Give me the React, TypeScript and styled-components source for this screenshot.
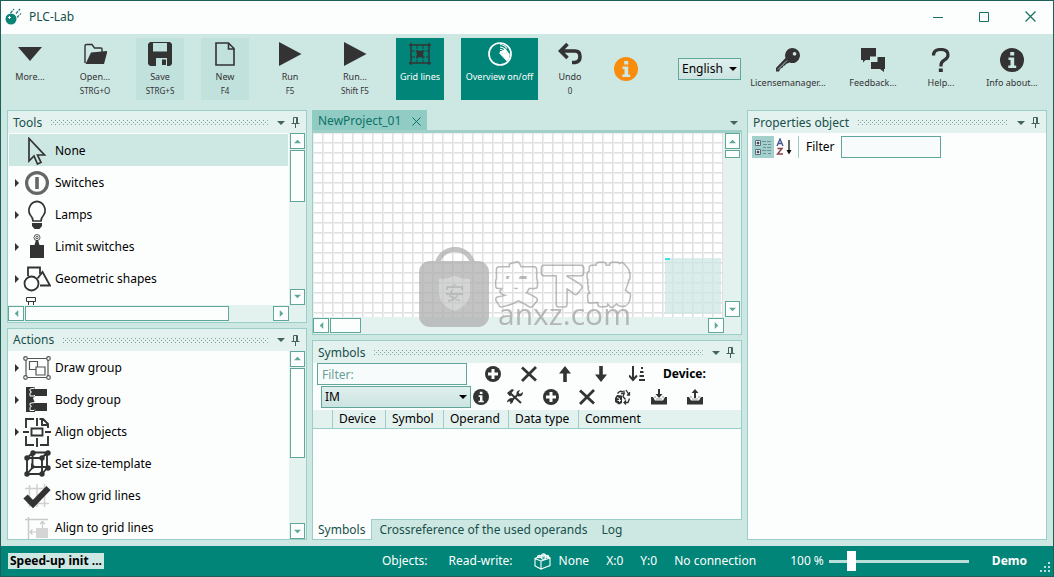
import React, { useId, useState } from "react";
import styled, { createGlobalStyle, css } from "styled-components";

const c = {
  teal: "#008578",
  frame: "#1f5f59",
  page: "#cde7e3",
  header: "#e3f1ef",
  border: "#9bcec6",
  strong: "#5fa79b",
  surface: "#fbfefd",
  ink: "#333333",
  title: "#17504a",
};

const Global = createGlobalStyle`
  *, *::before, *::after { box-sizing: border-box; }
  html, body { margin: 0; height: 100%; }
  #root { height: 100%; }
  body, button, input, select, table {
    font-family: "Noto Sans", "Noto Sans CJK SC", sans-serif;
    font-size: 12px;
    line-height: 16px;
  }
  button { border: 0; padding: 0; background: none; color: inherit; }
  svg { display: block; flex: none; }
`;

/* ---------- window ---------- */

const Window = styled.div`
  height: 100vh;
  display: flex;
  flex-direction: column;
  background: ${c.page};
  border: 1px solid ${c.frame};
  overflow: hidden;
`;

const TitleBar = styled.header`
  display: flex;
  align-items: center;
  flex: none;
  height: 33px;
  padding: 0 0 2px 4px;
  gap: 7px;
  background: ${c.surface};
  color: ${c.title};
`;

const AppTitle = styled.h1`
  margin: 0;
  flex: 1;
  font-size: 12px;
  font-weight: 400;
`;

const CaptionButtons = styled.div`
  display: flex;
`;

const CaptionButton = styled.button`
  width: 46px;
  height: 30px;
  display: grid;
  place-items: center;
  color: #15705f;
`;

/* ---------- toolbar ---------- */

const Toolbar = styled.div`
  display: flex;
  flex: none;
  height: 76px;
  padding: 4px 3px 10px 5px;
`;

const CommandGroup = styled.div`
  display: flex;
  gap: 17px;
`;

const ToolButton = styled.button<{ $width?: number; $tone?: "soft" | "solid" }>`
  flex: none;
  width: ${(p) => p.$width ?? 48}px;
  display: flex;
  flex-direction: column;
  align-items: center;
  padding-top: 4px;
  font-size: 9px;
  line-height: 14px;
  white-space: nowrap;
  color: ${c.ink};
  ${(p) => p.$tone === "soft" && css`background: #c1e1dd;`}
  ${(p) => p.$tone === "solid" && css`background: ${c.teal}; color: #fff;`}
`;

const ToolLabel = styled.span`
  margin-top: 4px;
`;

const Shortcut = styled.span`
  font-size: 8px;
  line-height: 14px;
`;

const NoticeButton = styled.button`
  align-self: center;
  margin-left: 29px;
`;

const SelectBox = styled.span<{ $width: number }>`
  display: grid;
  align-items: center;
  flex: none;
  width: ${(p) => p.$width}px;
  height: 22px;
  border: 1px solid ${c.strong};
  background: linear-gradient(#e0efed, #cbe4e1);
  > * { grid-area: 1 / 1; }
  > svg { justify-self: end; margin-right: 3px; pointer-events: none; }
`;

const Select = styled.select`
  appearance: none;
  width: 100%;
  border: 0;
  padding: 0 3px;
  background: none;
  color: #000;
`;

const LanguageBox = styled.div`
  align-self: center;
  margin-left: 40px;
`;

const HelpGroup = styled.div`
  display: flex;
  gap: 10px;
  margin-left: auto;
  padding-top: 6px;
`;

/* ---------- docking area ---------- */

const Workspace = styled.main`
  flex: 1;
  min-height: 0;
  display: grid;
  grid-template-columns: 300px minmax(0, 1fr) 300px;
  gap: 5px;
  padding: 0 6px 6px;
`;

const Column = styled.div`
  display: flex;
  flex-direction: column;
  gap: 5px;
  min-height: 0;
  min-width: 0;
`;

const Panel = styled.section`
  flex: 1 1 0;
  min-height: 0;
  display: flex;
  flex-direction: column;
  border: 1px solid ${c.border};
  background: ${c.surface};
`;

const PanelHeader = styled.div`
  display: flex;
  align-items: center;
  flex: none;
  height: 22px;
  padding: 1px 6px 0 5px;
  background: ${c.header};
  color: ${c.title};
`;

const PanelTitle = styled.h2`
  margin: 0 9px 0 0;
  font-size: 12px;
  font-weight: 400;
`;

const Grip = styled.svg`
  flex: 1;
  width: 0;
  height: 5px;
`;

const HeaderButton = styled.button`
  display: grid;
  place-items: center;
  width: 15px;
  height: 15px;
  color: #45625e;
`;

const HeaderButtons = styled.div`
  display: flex;
  margin-left: 5px;
  margin-right: -3px;
`;

const ScrollArea = styled.div<{ $horizontal?: boolean }>`
  flex: 1;
  min-height: 0;
  display: grid;
  grid-template-columns: minmax(0, 1fr) 17px;
  grid-template-rows: minmax(0, 1fr) ${(p) => (p.$horizontal ? "17px" : "")};
  background: ${c.header};
`;

const Bar = styled.div<{ $axis: "x" | "y" }>`
  display: flex;
  gap: 1px;
  background: ${c.header};
  flex-direction: ${(p) => (p.$axis === "y" ? "column" : "row")};
  padding: ${(p) => (p.$axis === "y" ? "0 1px" : "1px 0")};
  > :last-child { margin-${(p) => (p.$axis === "y" ? "top" : "left")}: auto; }
`;

const BarButton = styled.button`
  display: grid;
  place-items: center;
  flex: 0 0 16px;
  border: 1px solid ${c.strong};
  background: ${c.surface};
  color: ${c.strong};
`;

const Thumb = styled.div<{ $length: number }>`
  flex: 0 1 ${(p) => p.$length}px;
  border: 1px solid ${c.strong};
  background: ${c.surface};
`;

const List = styled.ul`
  margin: 0;
  padding: 1px 1px 0;
  list-style: none;
  overflow: hidden;
  background: ${c.surface};
`;

const Row = styled.button<{ $selected?: boolean }>`
  display: flex;
  align-items: center;
  width: 100%;
  height: 32px;
  padding-top: 1px;
  padding-left: 4px;
  text-align: left;
  color: #000;
  background: ${(p) => (p.$selected ? c.page : "transparent")};
`;

const Expander = styled.span`
  width: 9px;
  color: ${c.ink};
`;

const RowIcon = styled.span`
  display: grid;
  place-items: center;
  width: 30px;
  margin-right: 3px;
  color: ${c.ink};
`;

/* ---------- editor ---------- */

const Editor = styled.section`
  position: relative;
  flex: 1;
  min-height: 0;
  display: flex;
  flex-direction: column;
`;

const DocTabs = styled.div`
  display: flex;
  flex: none;
  height: 20px;
  justify-content: space-between;
  align-items: stretch;
  padding-right: 1px;
`;

const DocTab = styled.div`
  display: flex;
  align-items: center;
  gap: 8px;
  padding: 2px 4px 0 6px;
  background: #90cbc4;
  color: #0d7266;
`;

const DocTabButton = styled.button`
  display: grid;
  place-items: center;
  min-width: 14px;
`;

const DocMenuButton = styled(HeaderButton)`
  align-self: flex-end;
`;

const EditorFrame = styled.div`
  flex: 1;
  min-height: 0;
  display: flex;
  border: 1px solid ${c.border};
  border-top: 3px solid #a0d0c9;
`;

const Canvas = styled.div`
  position: relative;
  background-color: #fff;
  background-image: linear-gradient(90deg, #e0e0e0 1px, #eeeeee 1px 2px, transparent 2px),
    linear-gradient(#e0e0e0 1px, #eeeeee 1px 2px, transparent 2px);
  background-size: 10px 10px;
  background-position: -1px -1px;
`;

const Overview = styled.div`
  position: absolute;
  right: 3px;
  bottom: 3px;
  width: 56px;
  height: 56px;
  background: rgba(205, 231, 227, 0.75);
  &::before {
    content: "";
    display: block;
    width: 5px;
    height: 2px;
    background: #3fdfe2;
  }
`;

const Watermark = styled.div`
  position: absolute;
  inset: auto 0 0;
  display: flex;
  justify-content: center;
  pointer-events: none;
`;

/* ---------- symbols ---------- */

const SymbolsDock = styled.div`
  flex: 0 0 200px;
  display: flex;
  flex-direction: column;
`;

const SymbolTools = styled.div<{ $indent: number }>`
  display: flex;
  align-items: center;
  height: 23px;
  padding-bottom: 1px;
  padding-left: ${(p) => p.$indent}px;
`;

const TextBox = styled.input<{ $width: number }>`
  width: ${(p) => p.$width}px;
  height: 22px;
  padding: 0 4px;
  border: 1px solid ${c.strong};
  background: #f7fbfb;
  &::placeholder { color: #6aa097; opacity: 1; }
`;

const IconButton = styled.button<{ $width?: number }>`
  display: grid;
  place-items: center;
  width: ${(p) => p.$width ?? 36}px;
  height: 20px;
  color: ${c.ink};
`;

const IconStrip = styled.div<{ $gap: number }>`
  display: flex;
  margin-left: ${(p) => p.$gap}px;
`;

const DeviceLabel = styled.strong`
  margin-left: 8px;
  color: #000;
`;

const Table = styled.table`
  width: 100%;
  margin-top: 1px;
  border-spacing: 0;
  table-layout: fixed;
`;

const Th = styled.th<{ $width?: number }>`
  width: ${(p) => (p.$width ? p.$width + "px" : "auto")};
  height: 19px;
  padding: 0 0 0 6px;
  background: ${c.header};
  border-bottom: 1px solid ${c.border};
  border-right: 1px solid ${c.border};
  font-weight: 400;
  text-align: left;
  line-height: 16px;
  color: #000;
  &:last-child { border-right: 0; }
`;

const DockTabs = styled.div`
  display: flex;
  flex: none;
  height: 20px;
`;

const DockTab = styled.button<{ $active?: boolean }>`
  padding: 0 7px;
  color: ${c.title};
  ${(p) =>
    p.$active &&
    css`
      margin-top: -1px;
      padding: 2px 6px 0 5px;
      background: ${c.surface};
      border: 1px solid ${c.border};
      border-top: 0;
    `}
`;

/* ---------- properties ---------- */

const PropertyTools = styled.div`
  display: flex;
  align-items: center;
  padding: 3px 4px;
`;

const PropertyButton = styled.button<{ $active?: boolean }>`
  display: grid;
  place-items: center;
  width: 22px;
  height: 22px;
  background: ${(p) => (p.$active ? "#a3d0cb" : "none")};
`;

const Divider = styled.span`
  width: 1px;
  height: 22px;
  margin: 0 7px 0 2px;
  background: ${c.border};
`;

const FilterLabel = styled.label`
  display: flex;
  align-items: center;
  gap: 7px;
  color: #000;
`;

/* ---------- status bar ---------- */

const StatusBar = styled.footer`
  display: flex;
  align-items: center;
  flex: none;
  height: 30px;
  padding-left: 7px;
  background: ${c.teal};
  color: #fff;
  white-space: nowrap;
`;

const Progress = styled.strong`
  padding: 0 2px;
  margin-right: auto;
  background: ${c.page};
  color: #000;
`;

const StatusItems = styled.div`
  display: flex;
  align-items: center;
  gap: 17px;
`;

const StatusItem = styled.span<{ $wide?: boolean }>`
  display: flex;
  align-items: center;
  gap: 8px;
  margin-right: ${(p) => (p.$wide ? 4 : 0)}px;
`;

const Zoom = styled.label`
  display: flex;
  align-items: center;
  gap: 5px;
  margin-left: 34px;
`;

const Slider = styled.input`
  appearance: none;
  width: 140px;
  height: 22px;
  margin: 0;
  background: linear-gradient(#b9dfda, #b9dfda) center / 100% 3px no-repeat;
  &::-webkit-slider-thumb {
    appearance: none;
    width: 9px;
    height: 20px;
    background: #fff;
  }
`;

const Edition = styled.strong`
  margin: 0 12px 0 23px;
`;

const ResizeGrip = styled.span`
  align-self: flex-end;
  padding: 0 2px 3px 0;
`;

/* ---------- drawings ---------- */

const Triangle = ({ dir = "down", w = 8 }: { dir?: "up" | "down" | "left" | "right"; w?: number }) => {
  const pts = { down: "0,2 8,2 4,6", up: "0,6 8,6 4,2", left: "6,0 6,8 2,4", right: "2,0 2,8 6,4" }[dir];
  return (
    <svg width={w} height={w} viewBox="0 0 8 8" fill="currentColor">
      <polygon points={pts} />
    </svg>
  );
};

const PinIcon = () => (
  <svg width="9" height="11" viewBox="0 0 9 11" fill="none" stroke="currentColor">
    <path d="M2.5 6V.5h4V6M5.500 1v5M.5 6.500h8M4.500 7v4" />
  </svg>
);

const LogoIcon = () => (
  <svg width="17" height="17" viewBox="0 0 17 17">
    <circle cx="6" cy="11" r="5.500" fill="#0b8475" />
    <path d="M3 9.500h3M4.500 8v3" stroke="#fff" strokeWidth="1" />
    <path d="M5.500 5 9 1M11 5.500l4-4.500M12 9.500l4-4" stroke="#2b7a70" strokeWidth="1.200" strokeDasharray="3 1" />
  </svg>
);

const InfoIcon = ({ size, bg = c.ink, fg = c.page }: { size: number; bg?: string; fg?: string }) => (
  <svg width={size} height={size} viewBox="0 0 24 24">
    <circle cx="12" cy="12" r="12" fill={bg} />
    <path d="M10.200 4h4v3.600h-4zM8.500 9.500h5.700v8h2V20H8.300v-2.500h2.200V12h-2z" fill={fg} />
  </svg>
);

const G24 = ({ children }: { children: React.ReactNode }) => (
  <svg width="24" height="24" viewBox="0 0 24 24" fill="currentColor">
    {children}
  </svg>
);

const MoreIcon = () => <G24><path d="M0 5h24L12 19z" /></G24>;
const OpenIcon = () => (
  <G24>
    <path d="M2 21V4q0-1.500 1.500-1.500H9L11.500 6H18q1 0 1 1v3" fill="none" stroke="currentColor" strokeWidth="1.400" />
    <path d="M8 10.500 24.500 9 21 22H2.500z" />
  </G24>
);
const SaveIcon = () => (
  <G24>
    <path fillRule="evenodd" d="M2 0h3v9.500h14V0h3l2 2v20l-2 2H2l-2-2V2zM5 0h14v1H5zM8 16v8h11v-8z" />
    <path d="M14 17.500h4V23h-4z" />
  </G24>
);
const NewIcon = () => (
  <G24>
    <path d="M3 1h12.500L21 6.500V23H3zM15.500 1v6H21" fill="none" stroke="currentColor" strokeWidth="1.600" />
  </G24>
);
const RunIcon = () => <G24><path d="M1 0 23.500 12 1 24z" /></G24>;
const GridIcon = () => (
  <G24>
    <path d="M3 1v22M21 1v22M1 3h22M1 21h22" stroke={c.ink} strokeWidth="1.400" />
    <path d="M9 3v18M15 3v18M3 9h18M3 15h18" stroke={c.ink} strokeWidth=".9" strokeDasharray="4 1" />
    <path d="M9 9h6v6H9z" fill={c.ink} />
  </G24>
);
const RadarIcon = () => (
  <G24>
    <circle cx="12" cy="12" r="11" fill="none" stroke="#fff" strokeWidth="1.700" />
    <path d="M11 11 21.500 11.500a9.500 9.500 0 0 1-2.500 8z" fill="#fff" />
    <path d="M11 11 17.500 6.500 21.500 12z" fill="#fff" />
    <path d="M12 2.500a9.500 9.500 0 0 1 7 4M12 5a7 7 0 0 1 5.500 3M12 7.300a5 5 0 0 1 4 2.200M12 9.500a3 3 0 0 1 2 1" stroke="#fff" strokeWidth="1.100" fill="none" />
  </G24>
);
const UndoIcon = () => (
  <G24>
    <path d="M9.500 2 2.500 9l7 7M3 9h14q5 0 5 5.500t-5 6h-3" fill="none" stroke="currentColor" strokeWidth="3.600" />
  </G24>
);
const KeyIcon = () => (
  <G24>
    <path fillRule="evenodd" d="M16.500 0a7.500 7.500 0 1 1-3 14.400L10 16l-1 1.500-1.500.3-1 2-2 .7L3 23.500H0V20L9.500 10A7.500 7.500 0 0 1 16.500 0zm2 4a1.800 1.800 0 1 0 .1 0z" />
    <path d="M2 21.500 11 12.500" stroke={c.page} strokeWidth=".8" />
  </G24>
);
const FeedbackIcon = () => (
  <G24>
    <path d="M0 0h15v8.500H9V12H4.500L2 14.500V12H0z" />
    <path d="M16.500 9H24v12h-1v3l-4-3h-9v-7h6.500z" />
  </G24>
);
const HelpIcon = () => (
  <G24>
    <path d="M4.500 7.500q0-6 7.300-6 7.200 0 7.200 5.500 0 3-3.800 5.200-3.200 2-3.200 4.800v1.500" fill="none" stroke="currentColor" strokeWidth="3.200" />
    <path d="M9.800 20.500h4V24h-4z" />
  </G24>
);

const CursorIcon = () => (
  <svg width="20" height="28" viewBox="0 0 20 28" fill="none" stroke={c.ink} strokeWidth="1.700">
    <path d="M2 1.500v22.500l5-5 3.500 8 3.500-1.600-3.500-7.400H17.500z" />
  </svg>
);
const SwitchIcon = () => (
  <svg width="24" height="24" viewBox="0 0 24 24">
    <circle cx="12" cy="12" r="10.400" fill="none" stroke="#666" strokeWidth="3.200" />
    <path d="M10.200 6h3.600v12h-3.600z" fill="#666" />
  </svg>
);
const LampIcon = () => (
  <svg width="22" height="30" viewBox="0 0 22 30">
    <path d="M7 21q0-3-3-6.500A9 9 0 0 1 11 1.300a9 9 0 0 1 7 13.200q-3 3.500-3 6.500z" fill="none" stroke={c.ink} strokeWidth="1.700" />
    <path d="M6 23h10v3l-2.500 3h-5L6 26z" fill={c.ink} />
  </svg>
);
const LimitIcon = () => (
  <svg width="14" height="26" viewBox="0 0 14 26">
    <circle cx="7" cy="3.500" r="3" fill="none" stroke={c.ink} strokeWidth=".8" />
    <circle cx="7" cy="3.500" r="1.200" fill="none" stroke={c.ink} strokeWidth=".8" />
    <path d="M6 6h2l1.500 5H14v13H0V11h4.500z" fill={c.ink} />
  </svg>
);
const ShapesIcon = () => (
  <svg width="28" height="26" viewBox="0 0 28 26" fill="none" stroke={c.ink} strokeWidth="1.800">
    <path d="M5 10V1.500h12V8" />
    <circle cx="8.500" cy="17.500" r="7" />
    <path d="M14.500 12.500 19.500 6 27 19.500H17" />
  </svg>
);
const PartIcon = () => (
  <svg width="28" height="28" viewBox="0 0 28 28" fill="none" stroke={c.ink}>
    <path d="M3.500.5h9v4h-9zM5.500 4.500V28M10.500 4.500V28" />
  </svg>
);
const DrawGroupIcon = () => (
  <svg width="28" height="24" viewBox="0 0 28 24" fill="none" stroke="#555" strokeWidth="1.200">
    <path d="M3 2.500h22v19H3z" />
    <path d="M6.500 5.500h8v8h-8z" />
    <path d="M13 11h9v8h-9z" fill={c.surface} />
    <g fill={c.surface}>
      <circle cx="2.500" cy="2.500" r="1.800" />
      <circle cx="25.500" cy="2.500" r="1.800" />
      <circle cx="2.500" cy="21.500" r="1.800" />
      <circle cx="25.500" cy="21.500" r="1.800" />
    </g>
  </svg>
);
const BodyGroupIcon = () => (
  <svg width="22" height="26" viewBox="0 0 22 26">
    <path d="M0 0h9v2h12v7H9l-2 2 2 5h12v8H9v1H0z" fill={c.ink} />
    <path d="M9 1 4 2v2l1.500 1L4 6v3h4l1-1M9 15.500l-5 .8v2l1.500 1-1.500 1v3.200h4l1-1" fill="none" stroke={c.surface} strokeWidth="1" />
  </svg>
);
const AlignIcon = () => (
  <svg width="28" height="30" viewBox="0 0 28 30" fill="none" stroke={c.ink} strokeWidth="1.900">
    <path d="M11 2H3v9M3 19v9h8M17 28h8v-9M16.500 2H20l5 5v4M14 1v8M14 21v9M0 15h6M22 15h6M19 2v6h6" />
    <path d="M8.500 11.500h11v7h-11z" />
  </svg>
);
const SizeIcon = () => (
  <svg width="28" height="28" viewBox="0 0 28 28" fill="none" stroke={c.ink} strokeWidth="1.900">
    <path d="M4 8h15v16H4zM10 2.500h14V18L19 24M4 8l6-5.500M19 8l5-5.500M9.500 3v14H24M4 24l6-7" />
    <g fill={c.ink} stroke="none">
      <circle cx="4" cy="8" r="2.700" />
      <circle cx="19" cy="8" r="2.700" />
      <circle cx="4" cy="24" r="2.700" />
      <circle cx="19" cy="24" r="2.700" />
      <circle cx="10" cy="3" r="2.700" />
      <circle cx="25" cy="3" r="2.700" />
      <circle cx="25" cy="18" r="2.700" />
      <path d="M8 13l5 4-5 3z" />
    </g>
  </svg>
);
const CheckIcon = () => (
  <svg width="28" height="24" viewBox="0 0 28 24" fill="none">
    <path d="M6.500 1v22M14 0v23M21.500 0v23M2 4.500h20M4 19.500h22" stroke="#cfcfcf" strokeWidth="1.500" />
    <path d="M2.500 12.500 10 20 25.500 4" stroke={c.ink} strokeWidth="6" />
  </svg>
);
const SnapIcon = () => (
  <svg width="26" height="24" viewBox="0 0 26 24" fill="none" stroke="#c9c9c9" strokeWidth="1.500">
    <path d="M4.500 1v23M1 3.500h23" />
    <path d="M12 12h12v10H12z" fill="#d5d5d5" stroke="none" />
    <path d="M6 16h6M8.500 13.500 6 16l2.500 2.500M18.500 12V5.500M16 8l2.500-2.500L21 8" strokeWidth="1.200" />
  </svg>
);

const G16 = ({ children }: { children: React.ReactNode }) => (
  <svg width="16" height="16" viewBox="0 0 16 16" fill="currentColor">
    {children}
  </svg>
);
const AddIcon = () => (
  <G16>
    <circle cx="8" cy="8" r="8" />
    <path d="M8 3v10M3 8h10" stroke={c.surface} strokeWidth="3" />
  </G16>
);
const DeleteIcon = () => <G16><path d="M1 1.500 15 14.500M15 1 1 15" stroke="currentColor" strokeWidth="2.800" /></G16>;
const UpIcon = () => <G16><path d="M8 0l6 7.500h-4.200V16H6.200V7.500H2z" /></G16>;
const DownIcon = () => <G16><path d="M8 16l6-7.500h-4.200V0H6.200v8.500H2z" /></G16>;
const SortIcon = () => (
  <G16>
    <path d="M4 0v14M0 9.500l4 4.500 4-4.500" fill="none" stroke="currentColor" strokeWidth="2" />
    <path d="M12 1h2v2h-2zM11 5h3.500v2H11zM10.500 9H15v2h-4.500zM10 13h6v2h-6z" />
  </G16>
);
const ToolsIcon = () => (
  <G16>
    <path d="M2 3 14 14" stroke="currentColor" strokeWidth="2" />
    <path d="M12 4.500 3 13" stroke="currentColor" strokeWidth="2" />
    <path d="M9.500 5.500Q9 1.500 13 1l-1.500 3 1.500 1L16 3q0 4.500-4.500 4.500zM0 4l5-4 2 1L4 4.500l.5 2L2.500 7zM6.500 10q0 4.500-3.500 5L4 12.500 2.500 12 0 13.500Q0 9.500 5 9z" />
  </G16>
);
const RecycleIcon = () => (
  <G16>
    <path d="M0 9l2-3 5 .5V14l-3 1.500L0 13z" />
    <path d="M2 8.500l2.500 1V13M2.500 11.500H6" stroke={c.surface} strokeWidth=".9" fill="none" />
    <path d="M2.500 4.500Q5 1 8 3M6 4.500h3V1.500M11 1l3.500 5.500M12 6h2.500V3M14.500 9.500 13 13.500H9.500M11 11.500 9 13.500l2 2M9.500 3.500 8 7.500l2.500 3" fill="none" stroke="currentColor" strokeWidth="1.300" />
  </G16>
);
const ImportIcon = () => (
  <G16>
    <path d="M0 8h2l2 3.500h8L14 8h2v7.500H0zM7 0h2v5h2.500L8 9 4.500 5H7z" />
    <path d="M3 8h2M11 8h2M5 10h6" stroke="#999" />
  </G16>
);
const ExportIcon = () => (
  <G16>
    <path d="M0 8h2l2 3.500h8L14 8h2v7.500H0zM7 9h2V4h2.500L8 0 4.500 4H7z" />
    <path d="M3 8h2M11 8h2M5 10h6" stroke="#999" />
  </G16>
);
const CategoryIcon = () => (
  <svg width="18" height="18" viewBox="0 0 18 18" fill="none">
    <path d="M1.500 2.500h5v5h-5zM1.500 11.500h5v5h-5z" fill="#fff" stroke="#54708f" />
    <path d="M2.500 5h3M4 3.500v3M2.500 14h3M4 12.500v3" stroke="#111" />
    <path d="M8 3.500h4M13 3.500h4M9 6.500h4M14 6.500h3M9 9.500h3M13 9.500h4M8 12.500h4M13 12.500h4M9 15.500h3M14 15.500h3" stroke="#6d8d99" />
  </svg>
);
const SortAzIcon = () => (
  <svg width="18" height="18" viewBox="0 0 18 18" fill="none">
    <path d="M1 8 4 1l3 7M2 5.500h4" stroke="#4b568f" strokeWidth="1.400" />
    <path d="M1.500 10.500H6L1.500 16H7" stroke="#8b4144" strokeWidth="1.400" />
    <path d="M13 2v13" stroke="#111" strokeWidth="1.300" />
    <path d="M10.500 12h5L13 16.500z" fill="#111" />
  </svg>
);
const CubeIcon = () => (
  <svg width="17" height="17" viewBox="0 0 17 17" fill="none" stroke="#fff" strokeWidth="1.100">
    <path d="M1 5.500 7 8v8L1 13zM7 8l9-3v7.500L7 16M1 5.500 10 1.500 16 5" />
    <ellipse cx="5.500" cy="3.500" rx="2" ry="1.300" />
    <ellipse cx="9.500" cy="5" rx="2" ry="1.300" />
    <ellipse cx="9.500" cy="1.800" rx="1.800" ry="1.100" />
    <ellipse cx="13" cy="3.300" rx="1.800" ry="1.100" />
  </svg>
);
const CrossIcon = ({ size = 9 }: { size?: number }) => (
  <svg width={size} height={size} viewBox="0 0 10 10" fill="none" stroke="currentColor" strokeWidth="1.100">
    <path d="M.5.5l9 9M9.500.5l-9 9" />
  </svg>
);

const WatermarkArt = () => (
  <svg width="216" height="88" viewBox="0 0 216 88" aria-hidden="true">
    <defs>
      <mask id="hollow" maskUnits="userSpaceOnUse" x="70" y="0" width="146" height="80">
        <rect x="70" width="146" height="80" fill="#fff" />
        <use href="#wordmark" stroke="#000" strokeWidth="4" fill="#000" />
      </mask>
      <text
        id="wordmark"
        x="77 123 169"
        y="53"
        fontSize="41"
        fontWeight="700"
        strokeLinejoin="round"
        fontFamily="'Noto Sans CJK SC', sans-serif"
      >
        安下载
      </text>
    </defs>
    <g opacity=".72">
      <path d="M18 20a18 17.500 0 0 1 36 0" fill="none" stroke="#adadad" strokeWidth="5" />
      <rect y="14" width="70" height="66" rx="11" fill="#adadad" />
      <path d="M20 32q9 0 15.500-3.500Q42 32 51 32v13q0 13-15.500 19Q20 58 20 45z" fill="#c4c6c6" />
      <path d="M28 43v-3h15v3M35.500 37v3M27 47h17M33 43l-2 6 10 5M39 47q-2 6-10 7" fill="none" stroke="#a3a5a5" strokeWidth="1.800" />
      <use href="#wordmark" stroke="#a0a0a0" strokeWidth="7" fill="#a0a0a0" mask="url(#hollow)" />
      <text x="79" y="78" fontSize="30" fontFamily="'Open Sans', sans-serif" fill="#a0a0a0">
        anxz.com
      </text>
    </g>
  </svg>
);

/* ---------- composed parts ---------- */

const DotGrip = () => {
  const id = useId();
  return (
    <Grip aria-hidden="true">
      <defs>
        <pattern id={id} width="4" height="4" patternUnits="userSpaceOnUse">
          <path d="M0 0h1v1H0zM2 2h1v1H2z" fill="#76a39d" />
        </pattern>
      </defs>
      <rect width="100%" height="5" fill={`url(#${id})`} />
    </Grip>
  );
};

const Header = ({ title }: { title: string }) => (
  <PanelHeader>
    <PanelTitle>{title}</PanelTitle>
    <DotGrip />
    <HeaderButtons>
      <HeaderButton aria-label={`${title} menu`}><Triangle /></HeaderButton>
      <HeaderButton aria-label={`Pin ${title}`}><PinIcon /></HeaderButton>
    </HeaderButtons>
  </PanelHeader>
);

const ScrollBar = ({ axis, length }: { axis: "x" | "y"; length: number }) => (
  <Bar $axis={axis}>
    <BarButton aria-label="Scroll back"><Triangle dir={axis === "y" ? "up" : "left"} w={7} /></BarButton>
    <Thumb $length={length} />
    <BarButton aria-label="Scroll forward"><Triangle dir={axis === "y" ? "down" : "right"} w={7} /></BarButton>
  </Bar>
);

type Item = { label: string; icon: React.ReactNode; group?: boolean };

const ItemList = ({ items, selected }: { items: Item[]; selected?: string }) => (
  <List>
    {items.map((item, i) => (
      <li key={i}>
        <Row $selected={!!item.label && item.label === selected} aria-label={item.label || "Parts"}>
          <Expander>{item.group && <Triangle dir="right" />}</Expander>
          <RowIcon>{item.icon}</RowIcon>
          {item.label}
        </Row>
      </li>
    ))}
  </List>
);

const tools: Item[] = [
  { label: "None", icon: <CursorIcon /> },
  { label: "Switches", icon: <SwitchIcon />, group: true },
  { label: "Lamps", icon: <LampIcon />, group: true },
  { label: "Limit switches", icon: <LimitIcon />, group: true },
  { label: "Geometric shapes", icon: <ShapesIcon />, group: true },
  { label: "", icon: <PartIcon /> },
];

const actions: Item[] = [
  { label: "Draw group", icon: <DrawGroupIcon />, group: true },
  { label: "Body group", icon: <BodyGroupIcon />, group: true },
  { label: "Align objects", icon: <AlignIcon />, group: true },
  { label: "Set size-template", icon: <SizeIcon /> },
  { label: "Show grid lines", icon: <CheckIcon /> },
  { label: "Align to grid lines", icon: <SnapIcon /> },
];

type Command = {
  label: string;
  keys?: string;
  icon: React.ReactNode;
  width?: number;
  tone?: "soft" | "solid";
};

const commands: Command[] = [
  { label: "More...", icon: <MoreIcon /> },
  { label: "Open...", keys: "STRG+O", icon: <OpenIcon /> },
  { label: "Save", keys: "STRG+S", icon: <SaveIcon />, tone: "soft" },
  { label: "New", keys: "F4", icon: <NewIcon />, tone: "soft" },
  { label: "Run", keys: "F5", icon: <RunIcon /> },
  { label: "Run...", keys: "Shift F5", icon: <RunIcon /> },
  { label: "Grid lines", icon: <GridIcon />, tone: "solid" },
  { label: "Overview on/off", icon: <RadarIcon />, width: 77, tone: "solid" },
  { label: "Undo", keys: "0", icon: <UndoIcon />, width: 30 },
];

const helpCommands: Command[] = [
  { label: "Licensemanager...", icon: <KeyIcon />, width: 80 },
  { label: "Feedback...", icon: <FeedbackIcon />, width: 70 },
  { label: "Help...", icon: <HelpIcon />, width: 46 },
  { label: "Info about...", icon: <InfoIcon size={24} />, width: 76 },
];

const CommandButton = ({ label, keys, icon, width, tone }: Command) => (
  <ToolButton $width={width} $tone={tone}>
    {icon}
    <ToolLabel>{label}</ToolLabel>
    {keys && <Shortcut>{keys}</Shortcut>}
  </ToolButton>
);

export default function App() {
  const [zoom, setZoom] = useState(100);
  return (
    <>
      <Global />
      <Window>
        <TitleBar>
          <LogoIcon />
          <AppTitle>PLC-Lab</AppTitle>
          <CaptionButtons>
            <CaptionButton aria-label="Minimize">
              <svg width="10" height="10" stroke="currentColor"><path d="M0 5.500h10" /></svg>
            </CaptionButton>
            <CaptionButton aria-label="Maximize">
              <svg width="10" height="10" fill="none" stroke="currentColor"><path d="M.5.5h9v9h-9z" /></svg>
            </CaptionButton>
            <CaptionButton aria-label="Close"><CrossIcon size={11} /></CaptionButton>
          </CaptionButtons>
        </TitleBar>

        <Toolbar>
          <CommandGroup>
            {commands.map((cmd, i) => <CommandButton key={i} {...cmd} />)}
          </CommandGroup>
          <NoticeButton aria-label="Information"><InfoIcon size={24} bg="#f98c0c" /></NoticeButton>
          <LanguageBox>
            <SelectBox $width={63}>
              <Select aria-label="Language"><option>English</option></Select>
              <Triangle />
            </SelectBox>
          </LanguageBox>
          <HelpGroup>
            {helpCommands.map((cmd) => <CommandButton key={cmd.label} {...cmd} />)}
          </HelpGroup>
        </Toolbar>

        <Workspace>
          <Column>
            <Panel>
              <Header title="Tools" />
              <ScrollArea $horizontal>
                <ItemList items={tools} selected="None" />
                <ScrollBar axis="y" length={52} />
                <ScrollBar axis="x" length={204} />
              </ScrollArea>
            </Panel>
            <Panel>
              <Header title="Actions" />
              <ScrollArea>
                <ItemList items={actions} />
                <ScrollBar axis="y" length={90} />
              </ScrollArea>
            </Panel>
          </Column>

          <Column>
            <Editor>
              <DocTabs>
                <DocTab>
                  NewProject_01
                  <DocTabButton aria-label="Close NewProject_01"><CrossIcon /></DocTabButton>
                </DocTab>
                <DocMenuButton aria-label="Open documents"><Triangle /></DocMenuButton>
              </DocTabs>
              <EditorFrame>
                <ScrollArea $horizontal>
                  <Canvas><Overview /></Canvas>
                  <ScrollBar axis="y" length={8} />
                  <ScrollBar axis="x" length={31} />
                </ScrollArea>
              </EditorFrame>
              <Watermark><WatermarkArt /></Watermark>
            </Editor>

            <SymbolsDock>
              <Panel>
                <Header title="Symbols" />
                <SymbolTools $indent={4}>
                  <TextBox $width={150} placeholder="Filter:" aria-label="Filter symbols" />
                  <IconStrip $gap={8}>
                    <IconButton aria-label="Add symbol"><AddIcon /></IconButton>
                    <IconButton aria-label="Delete symbol"><DeleteIcon /></IconButton>
                    <IconButton aria-label="Move up"><UpIcon /></IconButton>
                    <IconButton aria-label="Move down"><DownIcon /></IconButton>
                    <IconButton aria-label="Sort"><SortIcon /></IconButton>
                  </IconStrip>
                  <DeviceLabel>Device:</DeviceLabel>
                </SymbolTools>
                <SymbolTools $indent={8}>
                  <SelectBox $width={150}>
                    <Select aria-label="Device"><option>IM</option></Select>
                    <Triangle />
                  </SelectBox>
                  <IconButton $width={20} aria-label="Device info"><InfoIcon size={16} fg={c.surface} /></IconButton>
                  <IconStrip $gap={6}>
                    <IconButton aria-label="Configure"><ToolsIcon /></IconButton>
                    <IconButton aria-label="Add device"><AddIcon /></IconButton>
                    <IconButton aria-label="Delete device"><DeleteIcon /></IconButton>
                    <IconButton aria-label="Clean up"><RecycleIcon /></IconButton>
                    <IconButton aria-label="Import"><ImportIcon /></IconButton>
                    <IconButton aria-label="Export"><ExportIcon /></IconButton>
                  </IconStrip>
                </SymbolTools>
                <Table>
                  <thead>
                    <tr>
                      <Th $width={20} aria-label="Row" />
                      <Th $width={53}>Device</Th>
                      <Th $width={58}>Symbol</Th>
                      <Th $width={65}>Operand</Th>
                      <Th $width={70}>Data type</Th>
                      <Th>Comment</Th>
                    </tr>
                  </thead>
                </Table>
              </Panel>
              <DockTabs>
                <DockTab $active>Symbols</DockTab>
                <DockTab>Crossreference of the used operands</DockTab>
                <DockTab>Log</DockTab>
              </DockTabs>
            </SymbolsDock>
          </Column>

          <Column>
            <Panel>
              <Header title="Properties object" />
              <PropertyTools>
                <PropertyButton $active aria-label="Categorized"><CategoryIcon /></PropertyButton>
                <PropertyButton aria-label="Alphabetical"><SortAzIcon /></PropertyButton>
                <Divider />
                <FilterLabel>
                  Filter
                  <TextBox $width={100} />
                </FilterLabel>
              </PropertyTools>
            </Panel>
          </Column>
        </Workspace>

        <StatusBar>
          <Progress>Speed-up init ...</Progress>
          <StatusItems>
            <StatusItem $wide>Objects:</StatusItem>
            <StatusItem $wide>Read-write:</StatusItem>
            <StatusItem><CubeIcon />None</StatusItem>
            <StatusItem>X:0</StatusItem>
            <StatusItem>Y:0</StatusItem>
            <StatusItem>No connection</StatusItem>
          </StatusItems>
          <Zoom>
            {zoom} %
            <Slider type="range" min={0} max={720} value={zoom} onChange={(e) => setZoom(Number(e.target.value))} />
          </Zoom>
          <Edition>Demo</Edition>
          <ResizeGrip>
            <svg width="12" height="12" fill="#b9dfda">
              <path d="M9 1h2v2H9zM9 5h2v2H9zM9 9h2v2H9zM5 5h2v2H5zM5 9h2v2H5zM1 9h2v2H1z" />
            </svg>
          </ResizeGrip>
        </StatusBar>
      </Window>
    </>
  );
}
